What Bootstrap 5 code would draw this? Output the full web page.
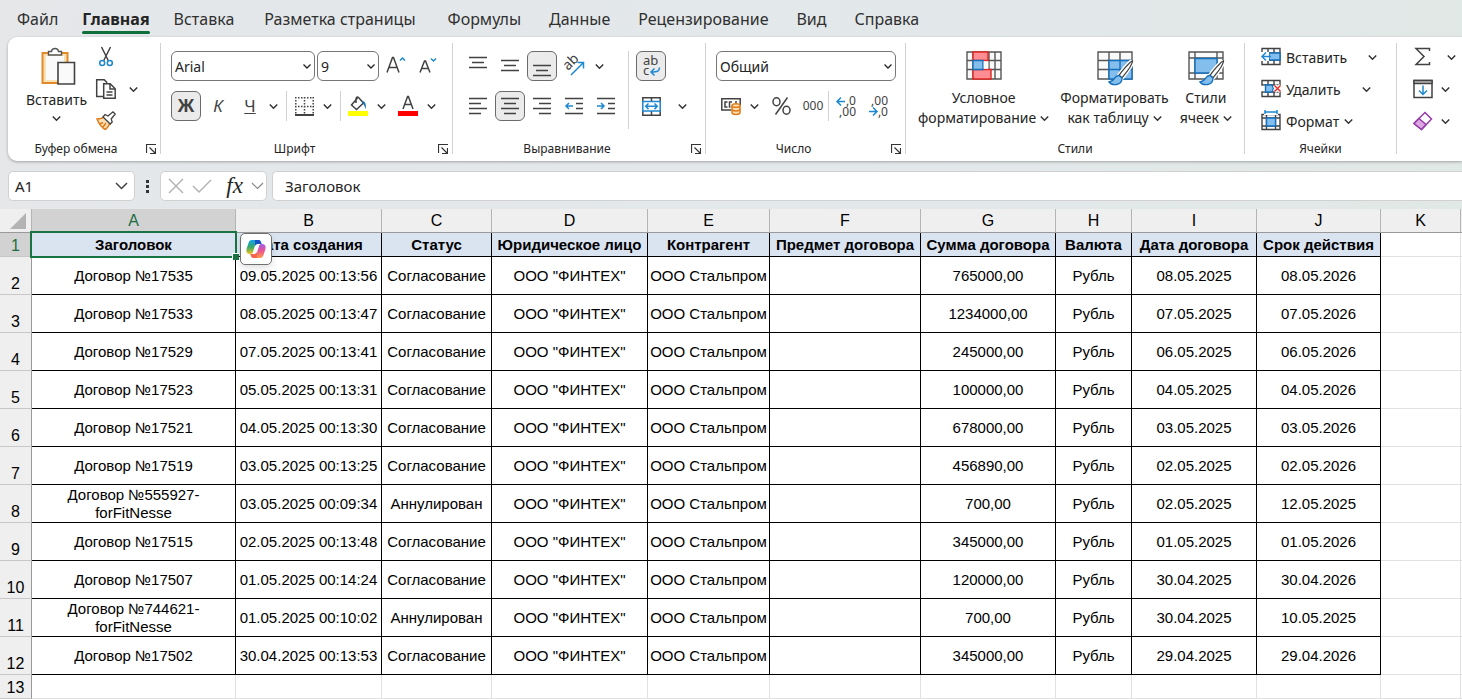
<!DOCTYPE html>
<html lang="ru">
<head>
<meta charset="utf-8">
<meta name="viewport" content="width=device-width, initial-scale=1">
<title>Договоры</title>
<link href="https://cdn.jsdelivr.net/npm/bootstrap@5.3.0/dist/css/bootstrap.min.css" rel="stylesheet">
<style>
  body { font-family: "Noto Sans", sans-serif; font-size: 14px; color: #242424; background: linear-gradient(100deg, #e5e7e9 0%, #e3e8eb 50%, #e0e8e5 100%); overflow-x: hidden; }
  svg { display: block; flex: none; overflow: visible; }
  svg text { font-family: "Noto Sans", sans-serif; fill: #424242; }
  .ln { fill: none; stroke: #424242; stroke-width: 1.5; }
  .bl { fill: none; stroke: #1e88d2; stroke-width: 1.5; }
  /* Tabs */
  .tabs { height: 37px; padding-left: 5px; }
  .tabs .nav-link { padding: 6px 12px 0; height: 34px; font-size: 16px; line-height: 26px; color: #303030; }
  .tabs .nav-link.active { font-weight: 700; color: #242424; position: relative; }
  .tabs .nav-link.active::after { content: ""; position: absolute; left: 12px; right: 12px; bottom: 0; height: 3px; border-radius: 2px; background: #0f703b; }
  .tabs .wide { padding-left: 18px; padding-right: 18px; }
  .tabs .wide ~ .nav-link { padding-left: 14px; padding-right: 14px; }
  /* Ribbon */
  .ribbon { height: 124px; margin-left: 8px; padding-top: 6px; background: #fff; border-radius: 9px 0 0 9px; box-shadow: 0 1px 3px #0000004d; overflow: clip; overflow-clip-margin: 6px; }
  .grp { flex: none; height: 111px; border-right: 1px solid #d1d1d1; }
  .grp-body { height: 97px; padding: 8px 0 0 10px; }
  .grp-foot { height: 14px; font-size: 12px; line-height: 18px; text-align: center; position: relative; }
  .launch { position: absolute; right: 4px; top: 4px; padding: 0; border: 0; background: none; }
  .g-clip { width: 153px; } .g-font { width: 292px; } .g-align { width: 253px; }
  .g-num { width: 200px; } .g-style { width: 339px; } .g-cells { width: 152px; } .g-edit { width: 76px; border: 0; }
  .rowgap { row-gap: 10px; }
  .colgap { column-gap: 2px; }
  .stack { display: flex; flex-direction: column; align-items: flex-start; row-gap: 4px; }
  .tb { width: 30px; height: 30px; padding: 0; display: flex; align-items: center; justify-content: center; border: 1px solid transparent; border-radius: 6px; background: none; color: #424242; flex: none; }
  .tb.on { background: #ebebeb; border-color: #6b6b6b; }
  .cv { width: 16px; height: 30px; padding: 0; border: 0; background: none; display: flex; align-items: center; justify-content: center; flex: none; }
  .stack .tb, .stack .cv, .stack .mini { height: 28px; }
  .two { font-size: 12px; line-height: 10px; text-align: right; display: grid; grid-template-columns: 1fr auto; width: 20px; align-items: center; }
  .vsep { width: 1px; height: 30px; margin: 0 2px 0 5px; background: #d1d1d1; flex: none; }
  .vsep.tall { height: 78px; margin: 0 7px; }
  .combo { height: 30px; padding: 0 16px 0 3px; border: 1px solid #767676; border-radius: 6px; font-size: 14px; color: #242424; background-position: right 2px center; background-size: 10px 10px; background-image: url("data:image/svg+xml,%3csvg xmlns='http://www.w3.org/2000/svg' viewBox='0 0 10 10'%3e%3cpath fill='none' stroke='%23242424' stroke-width='1.3' d='M1.5 3.5 5 7l3.5-3.5'/%3e%3c/svg%3e"); }
  .c-font { width: 144px; } .c-size { width: 62px; } .c-num { width: 180px; }
  .big { padding: 0; border: 0; background: none; color: #242424; line-height: 20px; font-size: 14px; display: flex; flex-direction: column; align-items: center; white-space: nowrap; }
  .styles { padding: 8px 12px 0; }
  .mini { padding: 0; border: 0; background: none; color: #242424; display: flex; align-items: center; gap: 5px; font-size: 14px; white-space: nowrap; }
  .letter { font-size: 17px; line-height: 20px; }
  /* Formula bar */
  .fbar { padding: 10px 0 8px 8px; height: 48px; }
  .fbox { height: 30px; background: #fff; border: 1px solid #d1d1d1; border-radius: 5px; }
  .fbox input { border: 0; outline: 0; background: none; width: 100%; min-width: 0; padding: 0; color: #242424; font-size: 15px; }
  .fbox button { border: 0; padding: 0; background: none; }
  .namebox { width: 127px; padding: 0 6px; }
  .fxbox { width: 107px; padding: 0 2px 0 7px; margin-right: 5px; }
  .fbox .fx { padding-left: 6px; font: italic 400 23px/24px "Liberation Serif", serif; color: #242424; }
  /* Sheet */
  .sheet { table-layout: fixed; width: 100%; border-collapse: separate; border-spacing: 0; background: #fff; font: 15px/18px "Liberation Sans", sans-serif; color: #000; }
  .sheet th, .sheet td { padding: 0; text-align: center; vertical-align: middle; white-space: nowrap; border: 0 solid #e1e1e1; border-width: 0 1px 1px 0; }
  .sheet tr > :last-child { border-right: 0; }
  .sheet thead th { height: 24px; font-size: 16px; line-height: 23px; font-weight: 400; background: #efefef; border-color: #999; border-right-color: #b5b5b5; }
  .sheet thead th.cur { background: #d2d2d2; color: #1e6b41; }
  .sheet tbody th { height: 38px; font-size: 16px; line-height: 20px; font-weight: 400; vertical-align: bottom; background: #efefef; border-color: #c8c8c8; border-right-color: #999; }
  .sheet tbody .low th, .sheet tbody .low td { height: 24px; }
  .sheet tbody th.cur { background: #d2d2d2; color: #1e6b41; }
  .sheet .data td:nth-child(-n+11) { border-color: #000; }
  .sheet .titles td:nth-child(-n+11) { background: #dae4f1; font-weight: 700; }
  .sheet .wrapcell { white-space: normal; padding: 0 30px; }
  .sel { position: absolute; inset: -2px; border: 2px solid #1a7343; }
  .sel::after { content: ""; position: absolute; right: -4px; bottom: -4px; width: 7px; height: 7px; background: #1a7343; border: solid #fff; border-width: 1px 0 0 1px; }
  .copilot { position: absolute; left: 100%; top: 0; margin-left: 5px; width: 32px; height: 32px; padding: 0; background: #fff; border: 1px solid #707070; border-radius: 5px; z-index: 2; display: flex; align-items: center; justify-content: center; box-shadow: 0 3px 6px #0000001f; }
</style>
</head>
<body>
<svg width="0" height="0" class="position-absolute" aria-hidden="true">
  <symbol id="chev" viewBox="0 0 8 8"><path d="M.7 2.2 4 5.5l3.3-3.3" fill="none" stroke="#333" stroke-width="1.3"/></symbol>
  <symbol id="launch" viewBox="0 0 10 10"><path d="M.5 9V.5H10M3.5 3.5l5.500 5.500M9.500 4v5.500H4" fill="none" stroke="#333" stroke-width="1.200"/></symbol>
  <symbol id="brush" viewBox="0 0 26 26"><path d="M24.500 .8c-3 1-11 11-13.500 14.500l3 2.500C17 14 25 5 24.500.8z" fill="#fff" stroke="#fff" stroke-width="4"/><path d="M24.500 .8c-3 1-11 11-13.500 14.500l3 2.500C17 14 25 5 24.500.8z" fill="#fff" stroke="#424242" stroke-width="1.300"/><path d="M11 15.500c-5-.5-4 6-10 6.500 3 4 13 4 13-4z" fill="#83beec" stroke="#1570bd" stroke-width="1.300"/></symbol>
</svg>

<nav class="tabs nav flex-nowrap text-nowrap">
  <a class="nav-link" href="#">Файл</a>
  <a class="nav-link active" href="#" aria-current="page">Главная</a>
  <a class="nav-link" href="#">Вставка</a>
  <a class="nav-link wide" href="#">Разметка страницы</a>
  <a class="nav-link" href="#">Формулы</a>
  <a class="nav-link" href="#">Данные</a>
  <a class="nav-link" href="#">Рецензирование</a>
  <a class="nav-link" href="#">Вид</a>
  <a class="nav-link" href="#">Справка</a>
</nav>

<section class="ribbon d-flex" aria-label="Лента">
  <div class="grp g-clip">
    <div class="grp-body d-flex pt-0">
      <button class="big ms-2 mt-1 align-self-start" type="button">
        <svg width="40" height="43" viewBox="0 0 40 43" class="ms-1"><path d="M3.500 6h25v30h-25z" fill="#fbe2b5" stroke="#e2892b" stroke-width="2"/><path d="M7 9h18v24H7z" fill="#fafafa"/><path d="M9.500 8V4.500h3c.5-4 6.500-4 7 0h3V8z" fill="#fff" stroke="#555" stroke-width="1.400"/><path d="M19 15.500h16.500v21.500H19z" fill="#fafafa" stroke="#424242" stroke-width="1.600"/></svg>
        <span>Вставить</span>
        <svg width="9" height="9" class="mt-1"><use href="#chev"/></svg>
      </button>
      <div class="stack ms-1">
        <button class="tb" type="button" aria-label="Вырезать"><svg width="14" height="20" viewBox="0 0 14 20"><path class="ln" d="M2.500 0 9.500 14M11.500 0 4.500 14"/><circle class="bl" cx="3.200" cy="16" r="2.500"/><circle class="bl" cx="10.800" cy="16" r="2.500"/></svg></button>
        <div class="d-flex"><button class="tb" type="button" aria-label="Копировать"><svg width="20" height="20" viewBox="0 0 20 20"><path d="M7 17.500H.7V.7h7.500l3 3" class="ln"/><path d="M7.700 4.700h6.500l5 5v9.600H7.700z" fill="#fff" stroke="#424242" stroke-width="1.500"/><path class="ln" d="M14 5v5h5M10.500 13h6M10.500 16h6"/></svg></button><button class="cv ms-1" type="button" aria-label="Варианты копирования"><svg width="9" height="9"><use href="#chev"/></svg></button></div>
        <button class="tb" type="button" aria-label="Формат по образцу"><svg width="20" height="20" viewBox="0 0 20 20"><path d="M1 8c3 0 6-1 7.500-2.500l6 6C13 14 12 16.500 9.500 18.500 6 17 3 13 1 8z" fill="#fce0b5" stroke="#e07b1a" stroke-width="1.500"/><path d="M4 13l3-1.500M7 16l3-4" stroke="#e07b1a" stroke-width="1.500"/><path d="m7 6 2-2.500 3 1.500L17 .8l2.200 2.200-4 5 1 3-2 2z" fill="#fff" stroke="#424242" stroke-width="1.300"/></svg></button>
      </div>
    </div>
    <div class="grp-foot pe-3">Буфер обмена<button class="launch" type="button" aria-label="Параметры буфера обмена"><svg width="10" height="10"><use href="#launch"/></svg></button></div>
  </div>

  <div class="grp g-font">
    <div class="grp-body d-flex flex-column rowgap">
      <div class="d-flex align-items-center colgap">
        <select class="form-select combo c-font" aria-label="Шрифт"><option>Arial</option></select>
        <select class="form-select combo c-size" aria-label="Размер шрифта"><option>9</option></select>
        <button class="tb" type="button" aria-label="Увеличить размер"><svg width="20" height="20" viewBox="0 0 20 20"><path class="ln" d="M1 16.500 6.500 1.500h1L13 16.500M3 11.500h8"/><path class="bl" d="m14 4.500 2.500-2.500L19 4.500"/></svg></button>
        <button class="tb" type="button" aria-label="Уменьшить размер"><svg width="18" height="18" viewBox="0 0 18 18"><path class="ln" d="M1 15.500 5.500 4h1L11 15.500M2.500 11.500h7"/><path class="bl" d="m12 1.500 2.500 2.500L17 1.500"/></svg></button>
      </div>
      <div class="d-flex align-items-center">
        <div class="d-flex colgap">
          <button class="tb on letter fw-bold" type="button">Ж</button>
          <button class="tb letter fst-italic" type="button">К</button>
          <button class="tb letter text-decoration-underline" type="button">Ч</button>
        </div>
        <button class="cv" type="button" aria-label="Варианты подчёркивания"><svg width="9" height="9"><use href="#chev"/></svg></button>
        <span class="vsep"></span>
        <button class="tb" type="button" aria-label="Границы"><svg width="19" height="19" viewBox="0 0 19 19"><path d="M0 .8h19M0 9.500h19M.8 0v18M9.500 0v18M18.200 0v18" fill="none" stroke="#424242" stroke-width="1.500" stroke-dasharray="1.500 1.500"/><path d="M0 18h19" stroke="#424242" stroke-width="2"/></svg></button>
        <button class="cv" type="button" aria-label="Варианты границ"><svg width="9" height="9"><use href="#chev"/></svg></button>
        <span class="vsep"></span>
        <button class="tb" type="button" aria-label="Заливка"><svg width="20" height="20" viewBox="0 0 20 20"><path class="ln" d="m9.500 2-6 7 5 4.500 7-6.500-5-5.500C9.500.5 8 1 8 3v4"/><path d="M14 5c3 0 4.500 3 3.700 8-1-1.500-1.200-4-2.500-5z" fill="#1570bd"/><path fill="#ff0" d="M0 15h20v5H0z"/></svg></button>
        <button class="cv" type="button" aria-label="Цвет заливки"><svg width="9" height="9"><use href="#chev"/></svg></button>
        <button class="tb ms-1" type="button" aria-label="Цвет шрифта"><svg width="20" height="20" viewBox="0 0 20 20"><path class="ln" d="m5 13 4.600-12.500h.8L15 13M6.500 8.500h7"/><path fill="red" d="M0 15h20v5H0z"/></svg></button>
        <button class="cv" type="button" aria-label="Варианты цвета"><svg width="9" height="9"><use href="#chev"/></svg></button>
      </div>
    </div>
    <div class="grp-foot pe-4">Шрифт<button class="launch" type="button" aria-label="Параметры шрифта"><svg width="10" height="10"><use href="#launch"/></svg></button></div>
  </div>

  <div class="grp g-align">
    <div class="grp-body d-flex">
      <div class="d-flex flex-column rowgap">
        <div class="d-flex colgap">
          <button class="tb" type="button" aria-label="По верхнему краю"><svg width="18" height="20" viewBox="0 0 18 20"><path class="ln" d="M0 1.500h18M3 6.500h12M0 11.500h18"/></svg></button>
          <button class="tb" type="button" aria-label="По середине"><svg width="18" height="20" viewBox="0 0 18 20"><path class="ln" d="M0 4.500h18M3 9.500h12M0 14.500h18"/></svg></button>
          <button class="tb on" type="button" aria-label="По нижнему краю"><svg width="18" height="20" viewBox="0 0 18 20"><path class="ln" d="M0 9.500h18M3 14.500h12M0 19.500h18"/></svg></button>
          <button class="tb" type="button" aria-label="Ориентация"><svg width="20" height="20" viewBox="0 0 20 20"><text x="4" y="15" font-size="14" transform="rotate(-45 4 15)">ab</text><path class="bl" d="M7 19 19 7M13.500 6.500h6v6"/></svg></button>
          <button class="cv" type="button" aria-label="Варианты ориентации"><svg width="9" height="9"><use href="#chev"/></svg></button>
        </div>
        <div class="d-flex colgap">
          <button class="tb" type="button" aria-label="По левому краю"><svg width="18" height="18" viewBox="0 0 18 18"><path class="ln" d="M0 1.500h18M0 6.500h12M0 11.500h18M0 16.500h12"/></svg></button>
          <button class="tb on" type="button" aria-label="По центру"><svg width="18" height="18" viewBox="0 0 18 18"><path class="ln" d="M0 1.500h18M3 6.500h12M0 11.500h18M3 16.500h12"/></svg></button>
          <button class="tb" type="button" aria-label="По правому краю"><svg width="18" height="18" viewBox="0 0 18 18"><path class="ln" d="M0 1.500h18M6 6.500h12M0 11.500h18M6 16.500h12"/></svg></button>
          <button class="tb" type="button" aria-label="Уменьшить отступ"><svg width="18" height="18" viewBox="0 0 18 18"><path class="ln" d="M0 1.500h18M11 6.500h7M11 11.500h7M0 16.500h18"/><path class="bl" d="M8 9H1M4 6 1 9l3 3"/></svg></button>
          <button class="tb" type="button" aria-label="Увеличить отступ"><svg width="18" height="18" viewBox="0 0 18 18"><path class="ln" d="M0 1.500h18M11 6.500h7M11 11.500h7M0 16.500h18"/><path class="bl" d="M0 9h7M4 6l3 3-3 3"/></svg></button>
        </div>
      </div>
      <span class="vsep tall"></span>
      <div class="d-flex flex-column rowgap">
        <button class="tb on" type="button" aria-label="Перенести текст"><svg width="18" height="20" viewBox="0 0 18 20"><text font-size="13"><tspan x="1" y="9">ab</tspan><tspan x="1" y="19">c</tspan></text><path class="bl" d="M17.500 11.500c0 4-2 4.500-8.500 4.500M12.500 12.500 9 16l3.500 3.500"/></svg></button>
        <div class="d-flex"><button class="tb" type="button" aria-label="Объединить"><svg width="19" height="19" viewBox="0 0 19 19"><path class="ln" d="M.8.8h17.400v17.400H.8zM9.500 1v4M9.500 14v4"/><path d="M.8 4.500h17.400v9.500H.8z" fill="#fff" stroke="#1e88d2" stroke-width="1.500"/><path class="bl" d="M4 9.300h11M6.500 6.500 3.700 9.300l2.800 2.800M12.500 6.500l2.800 2.800-2.800 2.800"/></svg></button><button class="cv ms-2" type="button" aria-label="Варианты объединения"><svg width="9" height="9"><use href="#chev"/></svg></button></div>
      </div>
    </div>
    <div class="grp-foot pe-4">Выравнивание<button class="launch" type="button" aria-label="Параметры выравнивания"><svg width="10" height="10"><use href="#launch"/></svg></button></div>
  </div>

  <div class="grp g-num">
    <div class="grp-body d-flex flex-column rowgap">
      <select class="form-select combo c-num" aria-label="Формат числа"><option>Общий</option></select>
      <div class="d-flex align-items-center">
        <button class="tb" type="button" aria-label="Финансовый формат"><svg width="20" height="18" viewBox="0 0 20 18"><path class="ln" d="M10 13H.8V1.800h18.400V8M6.500 5H4v5h2.500M11 5H8.500v5h1M16 5h-2"/><path d="M11 9v6.500c0 2.500 8 2.500 8 0V9z" fill="#fce0b5" stroke="#e07b1a" stroke-width="1.500"/><ellipse cx="15" cy="8.500" rx="4" ry="1.800" fill="#fce0b5" stroke="#e07b1a" stroke-width="1.500"/><path d="M11 12c0 2.500 8 2.500 8 0" fill="none" stroke="#e07b1a" stroke-width="1.500"/></svg></button>
        <button class="cv" type="button" aria-label="Валюты"><svg width="9" height="9"><use href="#chev"/></svg></button>
        <div class="d-flex colgap ms-1">
          <button class="tb" type="button" aria-label="Процентный формат"><svg width="19" height="18" viewBox="0 0 19 18"><path class="ln" d="M15.500.5 3.500 17.500"/><ellipse class="ln" cx="4.500" cy="4.800" rx="3.500" ry="4"/><ellipse class="ln" cx="14.500" cy="13.200" rx="3.500" ry="4"/></svg></button>
          <button class="tb" type="button" aria-label="Формат с разделителями"><svg width="20" height="12" viewBox="0 0 20 12"><text x="10" y="10" font-size="12" text-anchor="middle">000</text></svg></button>
        </div>
        <span class="vsep ms-0"></span>
        <div class="d-flex colgap">
          <button class="tb" type="button" aria-label="Увеличить разрядность"><svg width="20" height="20" viewBox="0 0 20 20"><path class="bl" d="M9 5.500H1M5 1.500 1 5.500l4 4"/><text font-size="12" text-anchor="end"><tspan x="20" y="9">,0</tspan><tspan x="20" y="20">,00</tspan></text></svg></button>
          <button class="tb" type="button" aria-label="Уменьшить разрядность"><svg width="20" height="20" viewBox="0 0 20 20"><path class="bl" d="M1 15.500h8M5 11.500l4 4-4 4"/><text font-size="12" text-anchor="end"><tspan x="20" y="9">,00</tspan><tspan x="20" y="20">,0</tspan></text></svg></button>
        </div>
      </div>
    </div>
    <div class="grp-foot pe-4">Число<button class="launch" type="button" aria-label="Параметры числа"><svg width="10" height="10"><use href="#launch"/></svg></button></div>
  </div>

  <div class="grp g-style">
    <div class="grp-body styles d-flex justify-content-between">
      <button class="big" type="button">
        <svg width="36" height="37" viewBox="0 0 36 37"><path d="M1 1h34v27H1zM1 9.500h34M1 18.500h34M7 1v27M23 1v27M29 1v27" fill="#fafafa" stroke="#555" stroke-width="1.400"/><path d="M7 1h15v8.500H7zM7 18.500h18V28H7z" fill="#ff8d92" stroke="#e0261f" stroke-width="1.400"/><path d="M7 9.500h10v9H7z" fill="#83beec" stroke="#1570bd" stroke-width="1.400"/><path d="M17.700 10.200h4.600v7.600h-4.600z" fill="#fafafa"/></svg>
        <span>Условное</span><span class="d-flex align-items-center">форматирование<svg width="9" height="9" class="ms-1"><use href="#chev"/></svg></span>
      </button>
      <button class="big" type="button">
        <svg width="36" height="37" viewBox="0 0 36 37"><path d="M1 1h34v27H1zM1 9.500h34M1 18.500h34M12 1v27M23 1v27" fill="#fafafa" stroke="#555" stroke-width="1.400"/><path d="M12 9.500h23V28H12z" fill="#83beec"/><path d="M12 9.500h23V28H12zM12 18.500h23M23 9.500V28" fill="none" stroke="#1570bd" stroke-width="1.400"/><use href="#brush" x="11" y="9" width="26" height="26"/></svg>
        <span>Форматировать</span><span class="d-flex align-items-center">как таблицу<svg width="9" height="9" class="ms-1"><use href="#chev"/></svg></span>
      </button>
      <button class="big" type="button">
        <svg width="36" height="37" viewBox="0 0 36 37"><path d="M1 1h34v27H1zM1 7h34M1 22h34M7 1v27M29 1v27" fill="#fafafa" stroke="#555" stroke-width="1.400"/><path d="M7 7.500h22V22H7z" fill="#83beec" stroke="#1570bd" stroke-width="1.400"/><use href="#brush" x="11" y="9" width="26" height="26"/></svg>
        <span>Стили</span><span class="d-flex align-items-center">ячеек<svg width="9" height="9" class="ms-1"><use href="#chev"/></svg></span>
      </button>
    </div>
    <div class="grp-foot">Стили</div>
  </div>

  <div class="grp g-cells">
    <div class="grp-body stack pt-0 ps-3">
      <button class="mini" type="button"><svg width="20" height="20" viewBox="0 0 20 20"><path d="M1 1.500h18v16H1zM7 1.500v16M13 1.500v16M1 6h18M1 13h18" fill="#fff" stroke="#424242" stroke-width="1.400"/><path d="M8 6h11v7H8z" fill="#83beec" stroke="#1570bd" stroke-width="1.400"/><path d="M0 5h8v9H0z" fill="#fff"/><path class="bl" d="M10 9.500H1M5 5.500l-4 4 4 4"/></svg>Вставить<svg width="9" height="9" class="ms-3"><use href="#chev"/></svg></button>
      <button class="mini" type="button"><svg width="20" height="20" viewBox="0 0 20 20"><path d="M1 1.500h18v16H1zM7 1.500v16M13 1.500v16M1 6h18M1 13h18" fill="#fff" stroke="#424242" stroke-width="1.400"/><path d="M0 6.700h4v5.600H0zM12 6.700h8v5.600h-8z" fill="#fff"/><path d="M4.500 6h6.500l1.500 3.500L11 13H4.500z" fill="#83beec" stroke="#1570bd" stroke-width="1.400"/><path d="m13.500 6.500 6 6M19.500 6.500l-6 6" stroke="#fff" stroke-width="4"/><path d="m13.500 6.500 6 6M19.500 6.500l-6 6" stroke="#e8312a" stroke-width="1.500"/></svg>Удалить<svg width="9" height="9" class="ms-3"><use href="#chev"/></svg></button>
      <button class="mini" type="button"><svg width="20" height="20" viewBox="0 0 20 20"><path d="M1 3.500h18v15H1zM5.500 3.500v15M14.500 3.500v15M1 7h18M1 15h18" fill="#fff" stroke="#424242" stroke-width="1.400"/><path d="M3 0h14v4H3z" fill="#fff"/><path d="M5.500 7h9v8h-9z" fill="#83beec" stroke="#1570bd" stroke-width="1.400"/><path class="bl" d="M4 1h12M4-1v4M16-1v4"/></svg>Формат<svg width="9" height="9"><use href="#chev"/></svg></button>
    </div>
    <div class="grp-foot">Ячейки</div>
  </div>

  <div class="grp g-edit">
    <div class="grp-body stack pt-0 ps-3">
      <div class="d-flex align-items-center"><button class="mini" type="button" aria-label="Автосумма"><svg width="20" height="20" viewBox="0 0 20 20"><path class="ln" d="M16.500 4V1.500H3l8 8-8 8h13.500V15"/></svg></button><button class="cv ms-2" type="button" aria-label="Варианты суммы"><svg width="9" height="9" class="ms-1"><use href="#chev"/></svg></button></div>
      <div class="d-flex align-items-center"><button class="mini" type="button" aria-label="Заполнить"><svg width="20" height="20" viewBox="0 0 20 20"><path d="M1 1.500h18v17H1z" fill="#fff" stroke="#424242" stroke-width="1.500"/><path d="M1 1.500h18v3H1z" fill="#bbb" stroke="#424242" stroke-width="1.300"/><path class="bl" d="M10 6.500v9M6 11.500l4 4 4-4"/></svg></button><button class="cv ms-1" type="button" aria-label="Варианты заполнения"><svg width="9" height="9"><use href="#chev"/></svg></button></div>
      <div class="d-flex align-items-center"><button class="mini" type="button" aria-label="Очистить"><svg width="20" height="20" viewBox="0 0 20 20"><path d="M12 1.500 18.500 8 8.500 18.500 1 12.500z" fill="#fff" stroke="#953aa8" stroke-width="1.500"/><path d="m6 7.500 7 6-4.500 5L1 12.500z" fill="#dba6e2" stroke="#953aa8" stroke-width="1.500"/></svg></button><button class="cv ms-1" type="button" aria-label="Варианты очистки"><svg width="9" height="9"><use href="#chev"/></svg></button></div>
    </div>
  </div>
</section>

<div class="fbar d-flex align-items-center">
  <div class="fbox namebox d-flex align-items-center"><input type="text" value="A1" aria-label="Имя ячейки"><button type="button" aria-label="Список имён"><svg width="13" height="8" viewBox="0 0 13 8"><path class="ln" d="m1 1 5.500 5.500L12 1"/></svg></button></div>
  <svg width="25" height="14" viewBox="0 0 25 14"><path fill="#333" d="M11 1h3v3h-3zM11 6h3v3h-3zM11 11h3v3h-3z"/></svg>
  <div class="fbox fxbox d-flex align-items-center justify-content-between">
    <button type="button" aria-label="Отмена"><svg width="16" height="16" viewBox="0 0 16 16"><path d="m1 1 14 14M15 1 1 15" stroke="#b0b0b0" stroke-width="1.400"/></svg></button>
    <button type="button" aria-label="Ввод"><svg width="20" height="16" viewBox="0 0 20 16"><path d="m1 8 6 6L19 2" fill="none" stroke="#b0b0b0" stroke-width="1.400"/></svg></button>
    <button type="button" class="fx">fx</button>
    <button type="button" aria-label="Список функций"><svg width="13" height="8" viewBox="0 0 13 8"><path d="m1 1 5.500 5.500L12 1" fill="none" stroke="#888" stroke-width="1.200"/></svg></button>
  </div>
  <div class="fbox flex-grow-1 d-flex align-items-center ps-2 border-end-0 rounded-end-0"><input class="ms-1" type="text" value="Заголовок" aria-label="Строка формул"></div>
</div>

<table class="sheet">
  <colgroup><col style="width:32px"><col style="width:204px"><col style="width:146px"><col style="width:110px"><col style="width:156px"><col style="width:122px"><col style="width:151px"><col style="width:135px"><col style="width:76px"><col style="width:125px"><col style="width:124px"><col style="width:80px"><col></colgroup>
  <thead><tr><th><svg width="17" height="16" viewBox="0 0 17 16" class="ms-auto me-1"><path d="M16 0v16H0z" fill="#b3b3b3"/></svg></th><th class="cur">A</th><th>B</th><th>C</th><th>D</th><th>E</th><th>F</th><th>G</th><th>H</th><th>I</th><th>J</th><th>K</th><th></th></tr></thead>
  <tbody>
    <tr class="data titles low"><th class="cur">1</th><td class="position-relative">Заголовок<span class="sel"></span><button class="copilot" type="button" aria-label="Copilot"><svg width="20" height="20" viewBox="0 0 20 20"><defs><linearGradient id="ca" x1="0" y1="0" x2="0" y2="1"><stop offset="0" stop-color="#12a5e8"/><stop offset=".5" stop-color="#38a868"/><stop offset="1" stop-color="#f2c521"/></linearGradient><linearGradient id="cb" x1="0" y1="0" x2="0" y2="1"><stop offset="0" stop-color="#a05be8"/><stop offset=".5" stop-color="#ee5590"/><stop offset="1" stop-color="#ff9b48"/></linearGradient></defs><path d="M6 1h6.500c2 0 2.500 2 3 4H12c-2 0-3 1-3.500 3L7 13c-.5 1.500-1.500 2-3 2-3 0-4-2-3.500-5L2.500 4C3 2 4 1 6 1z" fill="url(#ca)"/><path d="M9 1h3.500c2 0 2.500 2 3 4H12c-1.500 0-2.500.5-3 2z" fill="#1b51c4"/><path d="M14 19H7.500c-2 0-2.500-2-3-4H8c2 0 3-1 3.500-3L13 7c.5-1.500 1.500-2 3-2 3 0 4 2 3.500 5l-2 6c-.5 2-1.500 3-3.500 3z" fill="url(#cb)"/><path d="M11 19H7.500c-2 0-2.500-2-3-4H8c1.500 0 2.500-.5 3-2z" fill="#f7644e"/></svg></button></td><td>Дата создания</td><td>Статус</td><td>Юридическое лицо</td><td>Контрагент</td><td>Предмет договора</td><td>Сумма договора</td><td>Валюта</td><td>Дата договора</td><td>Срок действия</td><td></td><td></td></tr>
    <tr class="data"><th>2</th><td>Договор №17535</td><td>09.05.2025 00:13:56</td><td>Согласование</td><td>ООО "ФИНТЕХ"</td><td>ООО Стальпром</td><td></td><td>765000,00</td><td>Рубль</td><td>08.05.2025</td><td>08.05.2026</td><td></td><td></td></tr>
    <tr class="data"><th>3</th><td>Договор №17533</td><td>08.05.2025 00:13:47</td><td>Согласование</td><td>ООО "ФИНТЕХ"</td><td>ООО Стальпром</td><td></td><td>1234000,00</td><td>Рубль</td><td>07.05.2025</td><td>07.05.2026</td><td></td><td></td></tr>
    <tr class="data"><th>4</th><td>Договор №17529</td><td>07.05.2025 00:13:41</td><td>Согласование</td><td>ООО "ФИНТЕХ"</td><td>ООО Стальпром</td><td></td><td>245000,00</td><td>Рубль</td><td>06.05.2025</td><td>06.05.2026</td><td></td><td></td></tr>
    <tr class="data"><th>5</th><td>Договор №17523</td><td>05.05.2025 00:13:31</td><td>Согласование</td><td>ООО "ФИНТЕХ"</td><td>ООО Стальпром</td><td></td><td>100000,00</td><td>Рубль</td><td>04.05.2025</td><td>04.05.2026</td><td></td><td></td></tr>
    <tr class="data"><th>6</th><td>Договор №17521</td><td>04.05.2025 00:13:30</td><td>Согласование</td><td>ООО "ФИНТЕХ"</td><td>ООО Стальпром</td><td></td><td>678000,00</td><td>Рубль</td><td>03.05.2025</td><td>03.05.2026</td><td></td><td></td></tr>
    <tr class="data"><th>7</th><td>Договор №17519</td><td>03.05.2025 00:13:25</td><td>Согласование</td><td>ООО "ФИНТЕХ"</td><td>ООО Стальпром</td><td></td><td>456890,00</td><td>Рубль</td><td>02.05.2025</td><td>02.05.2026</td><td></td><td></td></tr>
    <tr class="data"><th>8</th><td class="wrapcell">Договор №555927-forFitNesse</td><td>03.05.2025 00:09:34</td><td>Аннулирован</td><td>ООО "ФИНТЕХ"</td><td>ООО Стальпром</td><td></td><td>700,00</td><td>Рубль</td><td>02.05.2025</td><td>12.05.2025</td><td></td><td></td></tr>
    <tr class="data"><th>9</th><td>Договор №17515</td><td>02.05.2025 00:13:48</td><td>Согласование</td><td>ООО "ФИНТЕХ"</td><td>ООО Стальпром</td><td></td><td>345000,00</td><td>Рубль</td><td>01.05.2025</td><td>01.05.2026</td><td></td><td></td></tr>
    <tr class="data"><th>10</th><td>Договор №17507</td><td>01.05.2025 00:14:24</td><td>Согласование</td><td>ООО "ФИНТЕХ"</td><td>ООО Стальпром</td><td></td><td>120000,00</td><td>Рубль</td><td>30.04.2025</td><td>30.04.2026</td><td></td><td></td></tr>
    <tr class="data"><th>11</th><td class="wrapcell">Договор №744621-forFitNesse</td><td>01.05.2025 00:10:02</td><td>Аннулирован</td><td>ООО "ФИНТЕХ"</td><td>ООО Стальпром</td><td></td><td>700,00</td><td>Рубль</td><td>30.04.2025</td><td>10.05.2025</td><td></td><td></td></tr>
    <tr class="data"><th>12</th><td>Договор №17502</td><td>30.04.2025 00:13:53</td><td>Согласование</td><td>ООО "ФИНТЕХ"</td><td>ООО Стальпром</td><td></td><td>345000,00</td><td>Рубль</td><td>29.04.2025</td><td>29.04.2026</td><td></td><td></td></tr>
    <tr class="low"><th>13</th><td></td><td></td><td></td><td></td><td></td><td></td><td></td><td></td><td></td><td></td><td></td><td></td></tr>
  </tbody>
</table>
<script src="https://cdn.jsdelivr.net/npm/bootstrap@5.3.0/dist/js/bootstrap.bundle.min.js"></script>
</body>
</html>
